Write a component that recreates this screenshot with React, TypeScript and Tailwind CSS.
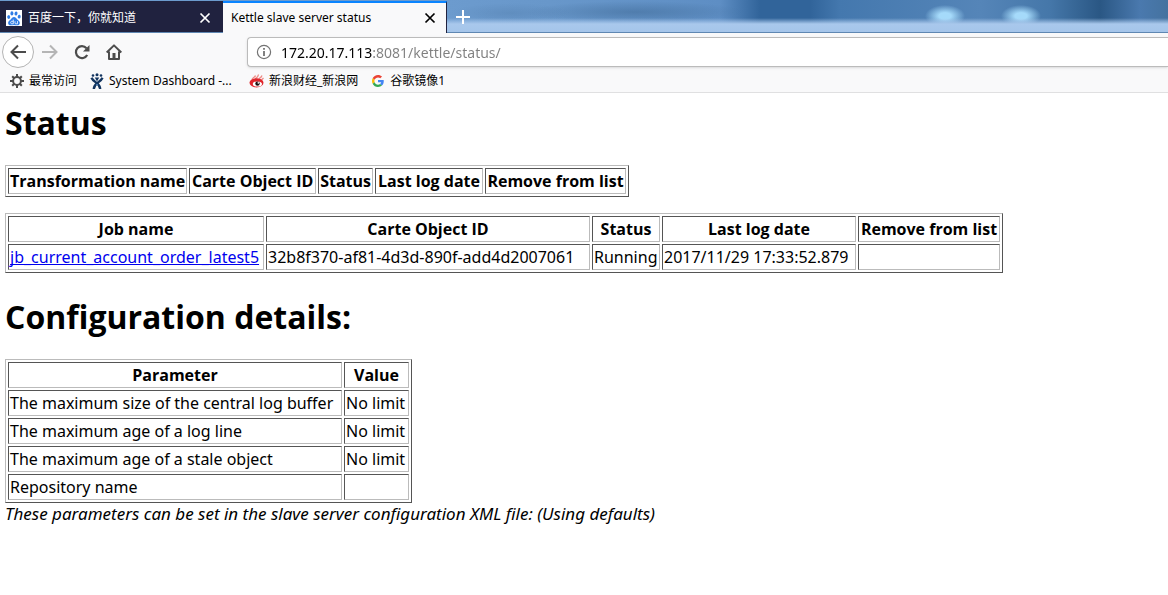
import React from 'react';

type Column = { label: string; width: string };

const transformationColumns: Column[] = [
  { label: 'Transformation name', width: 'w-[179px]' },
  { label: 'Carte Object ID', width: 'w-[127px]' },
  { label: 'Status', width: 'w-[54px]' },
  { label: 'Last log date', width: 'w-[108px]' },
  { label: 'Remove from list', width: 'w-[141px]' },
];

const jobColumns: Column[] = [
  { label: 'Job name', width: 'w-[256px]' },
  { label: 'Carte Object ID', width: 'w-[324px]' },
  { label: 'Status', width: 'w-[68px]' },
  { label: 'Last log date', width: 'w-[194px]' },
  { label: 'Remove from list', width: 'w-[142px]' },
];

const configColumns: Column[] = [
  { label: 'Parameter', width: 'w-[334px]' },
  { label: 'Value', width: 'w-[65px]' },
];

const cellBox =
  'h-[26px] whitespace-nowrap border border-t-[#555] border-l-[#555] border-r-[#bbb] border-b-[#bbb] p-px leading-[22px]';

function StatusTable({ label, columns, rows }: { label: string; columns: Column[]; rows: React.ReactNode[][] }) {
  return (
    <table
      aria-label={label}
      className="border-separate border-spacing-[2px] border border-t-[#bbb] border-l-[#bbb] border-r-[#555] border-b-[#555]"
    >
      <thead>
        <tr>
          {columns.map((c) => (
            <th key={c.label} scope="col" className={`${cellBox} ${c.width} text-center font-['Open_Sans',sans-serif] font-bold`}>
              {c.label}
            </th>
          ))}
        </tr>
      </thead>
      <tbody>
        {rows.map((row, i) => (
          <tr key={i}>
            {row.map((cell, j) => (
              <td key={j} className={cellBox}>
                {cell}
              </td>
            ))}
          </tr>
        ))}
      </tbody>
    </table>
  );
}

function BaiduIcon() {
  return (
    <svg viewBox="0 0 16 16" className="size-4 shrink-0" aria-hidden="true">
      <rect width="16" height="16" fill="#fff" />
      <g fill="#2f7de6">
        <ellipse cx="2.7" cy="7" rx="1.5" ry="1.9" transform="rotate(-10 2.7 7)" />
        <ellipse cx="5.9" cy="3.4" rx="1.5" ry="2.1" />
        <ellipse cx="10" cy="3.5" rx="1.5" ry="2.1" transform="rotate(10 10 3.5)" />
        <ellipse cx="13.2" cy="6.7" rx="1.5" ry="1.9" transform="rotate(10 13.2 6.7)" />
        <path d="M8 7c1.500 0 2.200 1.300 3.300 2.400 1.300 1.200 2.500 1.900 2.500 3.500 0 1.500-1.200 2.400-2.800 2.300-1.100 0-2-.3-3-.3s-2 .3-3 .3c-1.700.1-2.900-.8-2.900-2.300 0-1.600 1.300-2.400 2.600-3.500C5.800 8.300 6.500 7 8 7z" />
      </g>
      <path d="M7.300 9.600v4.200H5.700c-1.400 0-1.400-2.500 0-2.500h1.500M9 11.200v1.800q0 .8.900.8h1.600v-2.700" fill="none" stroke="#fff" strokeWidth=".8" />
    </svg>
  );
}

function JiraIcon() {
  return (
    <svg viewBox="0 0 16 16" className="size-4 shrink-0" aria-hidden="true">
      <g fill="#12345f">
        <circle cx="4" cy="2.500" r="1.300" />
        <circle cx="8" cy="1.700" r="1.500" />
        <circle cx="12" cy="2.500" r="1.300" />
      </g>
      <path d="M2.500 4.700c1.200 2.800 3.200 3.800 5.500 5.500 2.100 1.600 3 3.200 3.200 5.800" fill="none" stroke="#12345f" strokeWidth="2.400" />
      <path d="M13.500 4.700c-1.200 2.800-3.200 3.800-5.500 5.500-2.100 1.600-3 3.200-3.200 5.800" fill="none" stroke="#12345f" strokeWidth="2.400" />
      <path d="M5.800 4.500h4.400L8 8.500z" fill="#12345f" />
      <path d="M7 12.200l1-.9 1 .9" fill="none" stroke="#4b88c5" />
    </svg>
  );
}

function SinaIcon() {
  return (
    <svg viewBox="0 0 16 16" className="size-4 shrink-0" aria-hidden="true">
      <path d="M3 6.500C4 4 6 4.500 6.500 2.500M6 6C8 4.500 9.500 3.500 9.500 1.500M10 5.500c1.500-.5 2.500-1.500 3-3M12.500 7l2-2" fill="none" stroke="#ee8a84" strokeWidth="1.300" />
      <ellipse cx="7.500" cy="9.800" rx="7" ry="4.600" fill="#e0262c" />
      <ellipse cx="8.400" cy="11" rx="4.600" ry="2.600" fill="#fff" />
      <circle cx="8.500" cy="10.600" r="2.200" fill="#1b1010" />
      <circle cx="9.300" cy="9.900" r=".8" fill="#fff" />
    </svg>
  );
}

function GoogleIcon() {
  return (
    <svg viewBox="0 0 48 48" className="mx-0.5 size-3 shrink-0" aria-hidden="true">
      <path fill="#ea4335" d="M24 9.500c3.500 0 6.700 1.200 9.200 3.600l6.900-6.900C35.900 2.400 30.500 0 24 0 14.600 0 6.500 5.400 2.600 13.200l8 6.200C12.400 13.700 17.700 9.500 24 9.500z" />
      <path fill="#4285f4" d="M47 24.600c0-1.600-.2-3.100-.4-4.600H24v9h12.900c-.6 3-2.300 5.500-4.800 7.200l7.700 6C44.400 38 47 31.800 47 24.600z" />
      <path fill="#fbbc05" d="M10.500 28.600c-.5-1.500-.8-3-.8-4.600s.3-3.100.8-4.600l-8-6.200C.9 16.500 0 20.100 0 24s.9 7.500 2.600 10.800l7.900-6.200z" />
      <path fill="#34a853" d="M24 48c6.500 0 11.900-2.100 15.900-5.800l-7.700-6c-2.200 1.500-4.900 2.300-8.200 2.300-6.300 0-11.600-4.200-13.500-9.900l-8 6.200C6.500 42.600 14.600 48 24 48z" />
    </svg>
  );
}

function GearIcon() {
  return (
    <svg viewBox="0 0 16 16" className="size-4 shrink-0" fill="none" stroke="#4c4c4c" aria-hidden="true">
      <circle cx="8" cy="8" r="3.900" strokeWidth="2" />
      <path d="M8 1v3M8 12v3M1 8h3M12 8h3M3.200 3.200l2 2M10.800 10.800l2 2M3.200 12.800l2-2M10.800 5.200l2-2" strokeWidth="2" />
    </svg>
  );
}

function CloseIcon() {
  return (
    <svg viewBox="0 0 12 12" className="size-3" fill="none" stroke="currentColor" strokeWidth="1.700" aria-hidden="true">
      <path d="M1.500 1.500l9 9M10.500 1.500l-9 9" />
    </svg>
  );
}

function TabStrip() {
  return (
    <div className="flex h-[33px] border-b border-[#5f87b2] bg-[linear-gradient(to_bottom,transparent_18px,#a9c8ec_24px,#a5c5ea_100%),radial-gradient(ellipse_20px_11px_at_945px_16px,#a5dafa_30%,transparent),radial-gradient(ellipse_20px_11px_at_1021px_16px,#a5dafa_30%,transparent),radial-gradient(ellipse_60px_10px_at_510px_13px,#46709c44,transparent),radial-gradient(ellipse_110px_11px_at_635px_12px,#3a648f77,transparent),linear-gradient(to_right,#6c9bce_446px,#6897ca_550px,#5e8ec4_720px,#31649a_760px,#31649a_810px,#4478ae_840px,#5585b8_980px,#4577a9_1050px,#2a5784_1100px,#4a79ae_1140px,#44729f_100%)] pt-px">
      <div className="flex w-[223px] items-center bg-[#20223f] pl-1.5 pr-3 pt-0.5 text-white">
        <BaiduIcon />
        <a href="#baidu" className="ml-1.5 flex-1 whitespace-nowrap text-xs">百度一下，你就知道</a>
        <button type="button" aria-label="Close 百度一下 tab"><CloseIcon /></button>
      </div>
      <div className="-mb-px flex w-[224px] items-center border-r border-t-2 border-r-[#20223f] border-t-[#0a84ff] bg-[#f9f9fa] pl-2 pr-2.5 text-black">
        <a href="#status" aria-current="page" className="flex-1 whitespace-nowrap text-xs">Kettle slave server status</a>
        <button type="button" aria-label="Close Kettle tab"><CloseIcon /></button>
      </div>
      <button type="button" aria-label="New tab" className="flex w-8 items-center justify-center text-white">
        <svg viewBox="0 0 14 14" className="size-3.5" stroke="currentColor" strokeWidth="2" aria-hidden="true"><path d="M7 0v14M0 7h14" /></svg>
      </button>
    </div>
  );
}

function Toolbar() {
  return (
    <div className="flex h-[37px] items-center bg-[#f9f9fa] pt-px text-[#4c4c4c]">
      <button type="button" aria-label="Back" className="ml-0.5 flex size-8 items-center justify-center rounded-full border border-[#b4b4b4] bg-white">
        <svg viewBox="0 0 16 16" className="size-4" fill="none" stroke="currentColor" strokeWidth="2" aria-hidden="true"><path d="M16 8H1.500M8 1.500L1.500 8 8 14.500" /></svg>
      </button>
      <button type="button" aria-label="Forward" className="ml-2 text-[#b5b5b5]">
        <svg viewBox="0 0 16 16" className="size-4" fill="none" stroke="currentColor" strokeWidth="2" aria-hidden="true"><path d="M0 8h14.500M8 1.500L14.500 8 8 14.500" /></svg>
      </button>
      <button type="button" aria-label="Reload" className="ml-4">
        <svg viewBox="0 0 16 16" className="size-4" aria-hidden="true"><path d="M13.200 11A6 6 0 1 1 12.500 4.200" fill="none" stroke="currentColor" strokeWidth="2.200" /><path d="M15.500 1v6.500H9z" fill="currentColor" /></svg>
      </button>
      <button type="button" aria-label="Home" className="ml-4">
        <svg viewBox="0 0 16 16" className="size-4" fill="none" stroke="currentColor" strokeWidth="2" aria-hidden="true"><path d="M.7 8.500L8 1.400l7.300 7.100M3 7.500V15h10V7.500" strokeLinejoin="round" /><path d="M8 9v5" strokeWidth="3" /></svg>
      </button>
      <div className="ml-[125px] flex h-[30px] flex-1 items-center rounded-l-sm border border-r-0 border-[#bbb] bg-white pl-2 shadow-sm">
        <svg viewBox="0 0 16 16" className="size-4 shrink-0" fill="none" stroke="#737373" aria-hidden="true"><circle cx="8" cy="8" r="6.600" strokeWidth="1.200" /><path d="M8 7v5M8 4v1.800" strokeWidth="1.800" /></svg>
        <input
          type="text"
          aria-label="Address"
          defaultValue="172.20.17.113:8081/kettle/status/"
          className="ml-[9px] min-w-0 flex-1 bg-[linear-gradient(to_right,#000_91px,#808080_91px)] bg-clip-text pt-0.5 text-sm text-transparent caret-black outline-none"
        />
      </div>
    </div>
  );
}

function Bookmarks() {
  const link = 'flex items-center gap-1 whitespace-nowrap';
  return (
    <nav aria-label="Bookmarks" className="flex h-[23px] items-center gap-3 border-b border-[#e0e0e1] bg-[#f9f9fa] pl-[9px] text-xs text-black">
      <a href="#frequent" className={link}><GearIcon />最常访问</a>
      <a href="#dashboard" className={`${link} min-w-[148px]`}><JiraIcon />System Dashboard -...</a>
      <a href="#sina" className={link}><SinaIcon />新浪财经_新浪网</a>
      <a href="#google" className={link}><GoogleIcon />谷歌镜像1</a>
    </nav>
  );
}

export default function App() {
  return (
    <div className="min-h-screen bg-white font-['Noto_Sans','Noto_Sans_CJK_SC',sans-serif] text-base text-black">
      <header>
        <TabStrip />
        <Toolbar />
        <Bookmarks />
      </header>
      <main className="px-[5px] pt-2 leading-[22px]">
        <h1 className="font-['Open_Sans',sans-serif] text-[32px] font-bold leading-[44px]">Status</h1>
        <div className="mt-5">
          <StatusTable label="Transformations" columns={transformationColumns} rows={[]} />
        </div>
        <div className="mt-4">
          <StatusTable
            label="Jobs"
            columns={jobColumns}
            rows={[[
              <a href="#job" className="text-[#0000ee] underline [text-decoration-skip-ink:none]">jb_current_account_order_latest5</a>,
              '32b8f370-af81-4d3d-890f-add4d2007061',
              'Running',
              '2017/11/29 17:33:52.879',
              '',
            ]]}
          />
        </div>
        <h1 className="mt-[22px] font-['Open_Sans',sans-serif] text-[32px] font-bold leading-[44px]">Configuration details:</h1>
        <div className="mt-5">
          <StatusTable
            label="Configuration"
            columns={configColumns}
            rows={[
              ['The maximum size of the central log buffer', 'No limit'],
              ['The maximum age of a log line', 'No limit'],
              ['The maximum age of a stale object', 'No limit'],
              ['Repository name', ''],
            ]}
          />
        </div>
        <p className="text-[17px] italic">These parameters can be set in the slave server configuration XML file: (Using defaults)</p>
      </main>
    </div>
  );
}
